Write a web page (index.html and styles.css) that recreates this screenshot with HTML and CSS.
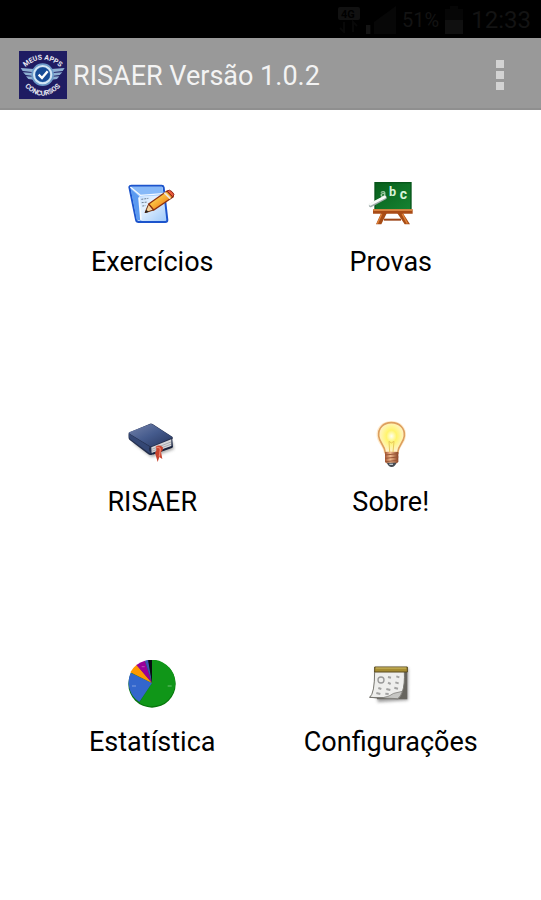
FILE: index.html
```html
<!DOCTYPE html>
<html lang="pt-BR">

<head>
    <meta charset="UTF-8">
    <meta name="viewport" content="width=device-width, initial-scale=1">
    <title>RISAER</title>
    <link rel="stylesheet" href="styles.css">
</head>

<body>
    <div class="status-bar">
        <svg class="network" viewBox="0 0 22 26">
            <rect x="0" y="0" width="22" height="13" rx="2" fill="#111" />
            <text x="3" y="11" font-size="11" font-weight="bold" fill="#000">4G</text>
            <path d="M6 15v10l-4-4M15 25V15l4 4" fill="none" stroke="#080808" stroke-width="2" />
        </svg>
        <svg class="signal" viewBox="0 0 30 28">
            <path d="M0 28v-9h5v9zM8 28V16l22-16v28z" fill="#070707" />
            <path d="M0 28v-9h4v9z" fill="#141414" />
        </svg>
        <span class="percent">51%</span>
        <svg class="battery" viewBox="0 0 18 28">
            <path d="M5 0h8v3h5v25H0V3h5z" fill="#060606" />
            <path d="M0 14h18v14H0z" fill="#101010" />
        </svg>
        <span class="clock">12:33</span>
    </div>

    <header class="action-bar">
        <svg class="logo" viewBox="15 18 144 144">
            <rect x="15" y="18" width="144" height="144" fill="#1f1c62" />
            <g fill="#8fb0d3">
                <path d="M20 69l40 3v10l-34-4zM27 82l32 2v9l-24-3zM36 94l24 1v9l-17-2z" />
                <path d="M152 69l-40 3v10l34-4zM145 82l-32 2v9l24-3zM136 94l-24 1v9l17-2z" />
            </g>
            <circle cx="86" cy="89" r="34" fill="#6d9bc9" />
            <circle cx="86" cy="89" r="26" fill="none" stroke="#d4e6f4" stroke-width="6" />
            <circle cx="86" cy="89" r="22" fill="#174b97" />
            <path d="M74 89l10 10 17-20" fill="none" stroke="#fff" stroke-width="7" />
            <path id="arc-top" d="M34 66Q86 22 138 66" fill="none" />
            <path id="arc-bottom" d="M30 122Q86 182 142 122" fill="none" />
            <g class="logo-text">
                <text text-anchor="middle"><textPath href="#arc-top" startOffset="50%">MEUS APPS</textPath></text>
                <text text-anchor="middle"><textPath href="#arc-bottom" startOffset="50%">CONCURSOS</textPath></text>
            </g>
        </svg>
        <h1>RISAER Versão 1.0.2</h1>
        <button class="more" type="button" aria-label="Mais opções">
            <i></i><i></i><i></i>
        </button>
    </header>

    <main class="menu">
        <button type="button">
            <svg viewBox="24 27 144 144">
                <defs>
                    <linearGradient id="paper" x1="0" y1="0" x2="1" y2="1">
                        <stop offset="0" stop-color="#9fcaff" />
                        <stop offset=".5" stop-color="#e4f1ff" />
                        <stop offset="1" stop-color="#9cc8fa" />
                    </linearGradient>
                    <linearGradient id="pencil" x1="0" y1="0" x2="1" y2="1">
                        <stop offset=".2" stop-color="#ffe25a" />
                        <stop offset=".7" stop-color="#f28a1c" />
                    </linearGradient>
                </defs>
                <path d="M28 48q1-4 6-4h91q5 0 6 5l11 98q0 6-6 6H56q-7 0-8-7z" fill="url(#paper)" stroke="#1c54cc" stroke-width="6" />
                <path d="M31 50l28 26 73-4-6-25H35z" fill="#87b9f8" />
                <path d="M31 48l30 25 68-5" fill="none" stroke="#f3f9ff" stroke-width="4" />
                <path d="M32 53l25 22 7 74-14-3z" fill="#5b9af0" />
                <path d="M57 79l6 68" stroke="#f5faff" stroke-width="5" />
                <path d="M64 85l21-3M65 95l18-2M67 105l10-1" stroke="#6d7f93" stroke-width="3" stroke-dasharray="6 3" />
                <path d="M75 125l11-26 15 18z" fill="#f6d39a" stroke="#6c2d10" stroke-width="3" />
                <path d="M86 99l55-39 18 18-58 39z" fill="url(#pencil)" stroke="#8c3010" stroke-width="4" />
                <path d="M141 60q7-6 15 2 10 8 3 16z" fill="#e95b3b" stroke="#942819" stroke-width="3" />
                <path d="M133 65l18 18" stroke="#eee6d8" stroke-width="6" />
                <path d="M75 126l4-10 7 7z" fill="#222" />
            </svg>
            <span>Exercícios</span>
        </button>

        <button type="button">
            <svg viewBox="24 27 144 144">
                <defs>
                    <linearGradient id="board" x1="0" y1="0" x2="1" y2="1">
                        <stop offset="0" stop-color="#075f1b" />
                        <stop offset="1" stop-color="#168332" />
                    </linearGradient>
                </defs>
                <path d="M67 125h17l-17 35H51zM131 125h-17l23 35h16z" fill="#a84d16" />
                <path d="M69 127l-14 31M129 127l16 31" stroke="#df8138" stroke-width="4" />
                <path d="M75 146h51" stroke="#9c4618" stroke-width="6" />
                <rect x="48" y="35" width="108" height="82" fill="url(#board)" stroke="#07551a" stroke-width="4" />
                <g class="chalk">
                    <text x="64" y="79" font-size="32" opacity=".7">a</text>
                    <text x="90" y="75" font-size="38">b</text>
                    <text x="122" y="84" font-size="42">c</text>
                </g>
                <path d="M42 115h119v13H42z" fill="#a94b16" />
                <path d="M43 117h117" stroke="#e69750" stroke-width="4" />
                <path d="M35 103L78 80" stroke="#9eaaa9" stroke-width="11" stroke-linecap="round" />
                <path d="M34 100L77 78" stroke="#f7faf8" stroke-width="8" stroke-linecap="round" />
            </svg>
            <span>Provas</span>
        </button>

        <button type="button">
            <svg viewBox="24 21 144 144">
                <defs>
                    <linearGradient id="cover" x1="0" y1="0" x2="1" y2="1">
                        <stop offset="0" stop-color="#7583aa" />
                        <stop offset=".5" stop-color="#455b8d" />
                        <stop offset="1" stop-color="#27365e" />
                    </linearGradient>
                    <filter id="soft" x="-20%" y="-20%" width="140%" height="140%">
                        <feGaussianBlur stdDeviation="4" />
                    </filter>
                </defs>
                <path d="M37 88l58 45 67-24-4-22z" fill="#555" opacity=".5" filter="url(#soft)" />
                <path d="M26 59L90 32q5-1 9 2l58 37q4 4 0 8l2 23-65 24q-6 1-11-4L29 81q-5-4-3-22z" fill="#242f4d" />
                <path d="M94 103l60-24v20l-59 21z" fill="#d9d9da" />
                <path d="M95 109l58-22M95 115l58-21" stroke="#8d8f98" stroke-width="2" />
                <path d="M27 58l64-25q4-1 8 2l56 36q3 3-2 5L97 99q-5 2-9-1L29 62q-3-2-2-4z" fill="url(#cover)" />
                <path d="M27 62l62 39q-6 8 3 19l-5-1L30 78q-5-6-3-16z" fill="#344774" />
                <path d="M99 122l58-20" stroke="#1a223a" stroke-width="5" />
                <path d="M107 101q10-7 21 1 3 9-5 15l4 21-9-6-5 15-8-28q7-8 2-18z" fill="#c8432d" />
                <path d="M109 103q12-1 12 7l-3 21" fill="none" stroke="#ee806a" stroke-width="4" />
            </svg>
            <span>RISAER</span>
        </button>

        <button type="button">
            <svg viewBox="24 21 144 144">
                <defs>
                    <radialGradient id="glow" cx=".5" cy=".45" r=".5">
                        <stop offset="0" stop-color="#fffff2" />
                        <stop offset=".4" stop-color="#fff46c" />
                        <stop offset=".75" stop-color="#fff5a5" />
                        <stop offset="1" stop-color="#fff0c7" />
                    </radialGradient>
                    <linearGradient id="socket">
                        <stop offset="0" stop-color="#a4532f" />
                        <stop offset=".4" stop-color="#f2bc91" />
                        <stop offset="1" stop-color="#874022" />
                    </linearGradient>
                </defs>
                <path d="M97 24c-29 0-47 20-44 46 2 21 18 28 22 51h44c4-23 20-31 22-51 3-26-15-46-44-46z" fill="#ffe0ae" opacity=".6" />
                <path d="M97 29c-25 0-40 17-38 40 2 21 19 28 20 50h37c1-22 18-29 20-50 2-23-14-40-39-40z" fill="url(#glow)" stroke="#dd9f5e" stroke-width="5" />
                <path d="M92 117l-2-32 7 5 8-5-3 32" fill="none" stroke="#e8c95e" stroke-width="3" />
                <path d="M78 117h40v29q-3 5-8 6H86q-6-1-8-6z" fill="url(#socket)" />
                <path d="M78 126l40-4M78 136l40-4M79 146l38-4" stroke="#9a5636" stroke-width="3" />
                <path d="M84 149h28q-3 12-14 13-11-1-14-13z" fill="#454a51" />
                <path d="M91 154h11" stroke="#bfc5ca" stroke-width="4" />
            </svg>
            <span>Sobre!</span>
        </button>

        <button type="button">
            <svg viewBox="24 24 144 144">
                <circle cx="96" cy="96" r="71" fill="#08760c" />
                <path d="M96 93V23a70 70 0 1 1-38 129z" fill="#109618" />
                <path d="M96 93l-38 57A70 70 0 0 1 32 62z" fill="#3366cc" />
                <path d="M96 93L31 61a70 70 0 0 1 19-23z" fill="#ff9900" />
                <path d="M96 93L49 39a70 70 0 0 1 26-13z" fill="#990099" />
                <path d="M96 93L75 26l10-3z" fill="#3b55b8" />
                <path d="M96 93L84 23l12-1z" fill="#080b12" />
                <path d="M36 102h12M143 102h12M65 44h9" stroke="#fff" stroke-width="4" opacity=".25" />
            </svg>
            <span>Estatística</span>
        </button>

        <button type="button">
            <svg viewBox="24 24 144 144">
                <path d="M49 48h99l-1 97-91 6z" fill="#444" opacity=".5" filter="url(#soft)" />
                <path d="M49 46h96v96H54z" fill="#67655f" />
                <path d="M48 57h88q2 40-6 63-5 16-14 20l-84-4q15-11 15-79z" fill="#eeeeec" stroke="#77766f" stroke-width="3" />
                <path d="M32 136q47 7 72-12l26-6q-5 16-14 22z" fill="#c6c6c3" stroke="#72716c" stroke-width="2" />
                <path d="M47 45h98v15H47z" fill="#a58c32" stroke="#594b20" stroke-width="3" />
                <path d="M50 48h92" stroke="#d3bf69" stroke-width="3" />
                <circle cx="66" cy="84" r="9" fill="none" stroke="#999" stroke-width="4" />
                <path d="M87 75l9 2M112 73l9 3M87 92l8 4M109 91l10 3M58 108l9 3M82 111l12 3M106 107l11 3M52 123l12 3M79 125l10 1" stroke="#a2a2a1" stroke-width="6" />
            </svg>
            <span>Configurações</span>
        </button>
    </main>
</body>

</html>
```
FILE: styles.css
```css
* {
    box-sizing: border-box;
}

body {
    margin: 0;
    background-color: #fff;
    font-family: Roboto, "Liberation Sans", sans-serif;
}

button {
    border: none;
    padding: 0;
    background: none;
    color: inherit;
    font: inherit;
    cursor: pointer;
}

.status-bar {
    display: flex;
    justify-content: flex-end;
    align-items: center;
    height: 38px;
    padding: 2px 10px 0;
    background-color: #000;
    color: #131313;
}

.network {
    width: 22px;
    height: 26px;
    margin-right: 6px;
}

.signal {
    width: 30px;
    height: 28px;
    margin-right: 6px;
}

.percent {
    font-size: 20px;
    margin-right: 6px;
}

.battery {
    width: 18px;
    height: 28px;
    margin-right: 8px;
}

.clock {
    font-size: 24px;
}

.action-bar {
    display: flex;
    align-items: center;
    height: 72px;
    padding: 3px 21px 0 19px;
    background-color: #999;
    border-bottom: 2px solid #8f8f8f;
}

.logo {
    width: 48px;
    height: 48px;
    margin-right: 6px;
}

.logo-text {
    fill: #e8e8f2;
    font-size: 21px;
    font-weight: bold;
}

h1 {
    flex: 1;
    margin: 0;
    padding-top: 3px;
    color: #f3f3f3;
    font-size: 27px;
    font-weight: normal;
}

.more {
    display: flex;
    flex-direction: column;
    align-items: center;
    gap: 3px;
    width: 40px;
}

.more i {
    width: 8px;
    height: 8px;
    background-color: #d3d3d3;
}

/* two columns of icons */
.menu {
    display: grid;
    grid-template-columns: 1fr 1fr;
    grid-auto-rows: 240px;
    padding: 0 31px 0 33px;
}

.menu button {
    display: flex;
    flex-direction: column;
    align-items: center;
    justify-content: flex-start;
    gap: 18px;
    padding-top: 70px;
}

.menu svg {
    width: 48px;
    height: 48px;
}

.menu span {
    color: #000;
    font-size: 27px;
    line-height: 32px;
}

.chalk {
    fill: #d8f3d9;
    font-weight: bold;
}
```
